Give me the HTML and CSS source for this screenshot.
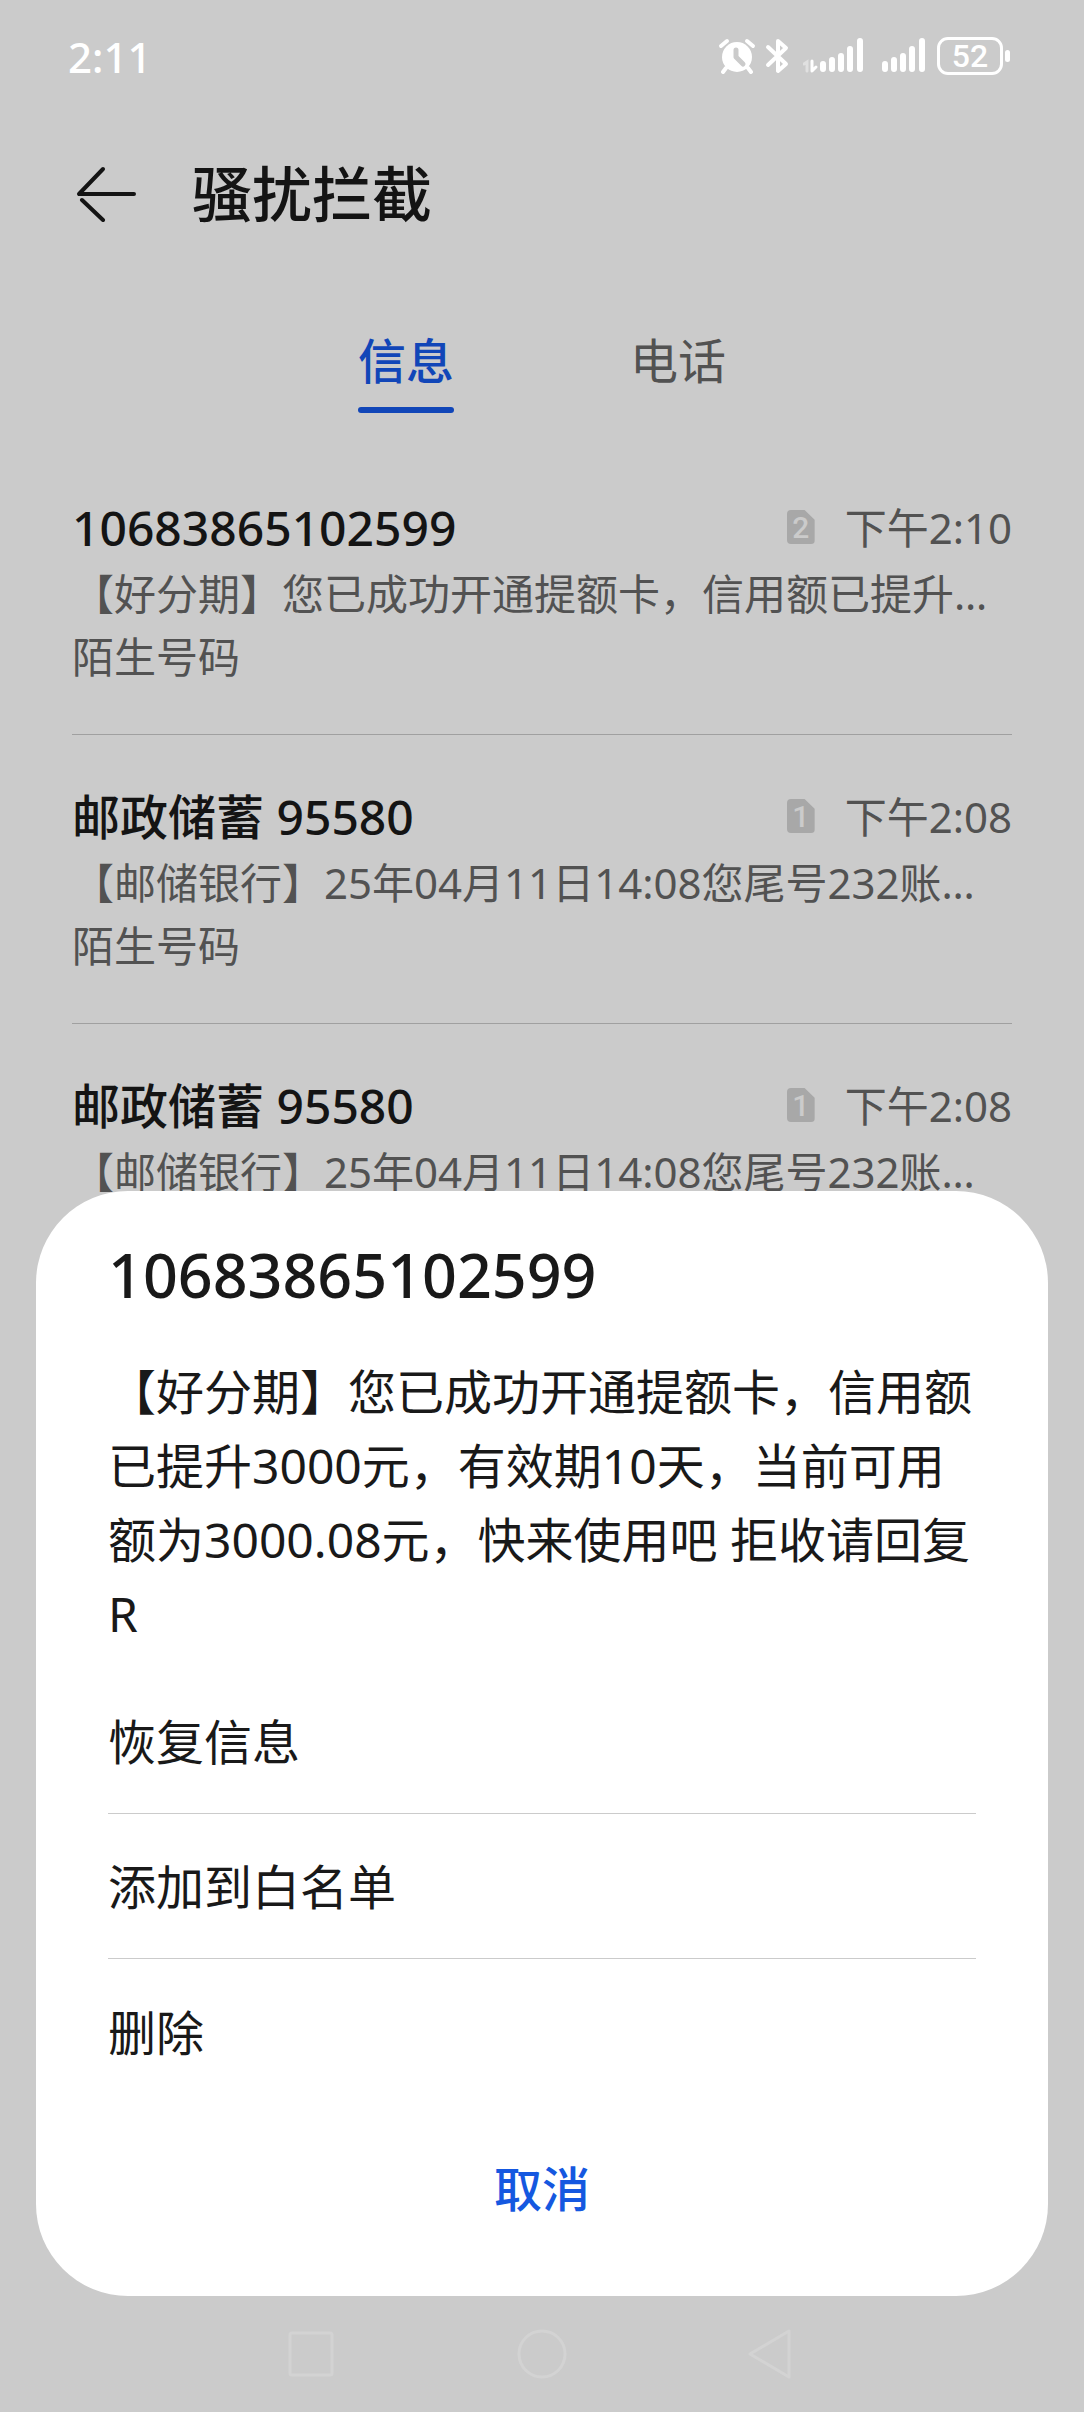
FILE: index.html
```html
<!DOCTYPE html>
<html lang="zh-CN">
<head>
  <meta charset="UTF-8">
  <title>骚扰拦截</title>
  <meta name="viewport" content="width=device-width, initial-scale=1.0">
  <link rel="stylesheet" href="styles.css">
</head>
<body>

  <div class="screen">
    <!-- Status bar -->
    <div class="status-bar">
      <span class="clock">2:11</span>
      <div class="status-icons">
        <svg class="icon-alarm" width="38" height="36" viewBox="0 0 38 36" fill="none" stroke="#fff" stroke-linecap="round">
          <path d="M3 8 L9 3 M35 8 L29 3" stroke-width="4"/>
          <path d="M8 30 L5 34 M30 30 L33 34" stroke-width="4"/>
          <circle cx="19" cy="19" r="15" fill="#fff" stroke="none"/>
          <path d="M18 12 V19 L25 26" stroke="#cbcbcb" stroke-width="5" stroke-linejoin="round"/>
        </svg>
        <svg class="icon-bluetooth" width="24" height="36" viewBox="0 0 24 36" fill="none" stroke="#fff" stroke-width="4" stroke-linecap="round" stroke-linejoin="round">
          <path d="M3 9 L21 26 L13 33 V3 L21 10 L3 27"/>
        </svg>
        <svg class="icon-data" width="60" height="36" viewBox="0 0 60 36" fill="none" stroke="#fff" stroke-linecap="round">
          <path d="M1 26 L4 24 V33" stroke-width="3" opacity=".4"/>
          <path d="M9 23 V33 L13 29" stroke-width="3" stroke-linejoin="round"/>
          <path d="M20 26 V31 M29 22 V31 M38 18 V31 M47 11 V31 M57 3 V31" stroke-width="6"/>
        </svg>
        <svg class="icon-signal" width="43" height="36" viewBox="0 0 43 36" fill="none" stroke="#fff" stroke-width="6" stroke-linecap="round">
          <path d="M3 26 V31 M12 22 V31 M21 18 V31 M30 11 V31 M40 3 V31"/>
        </svg>
        <span class="battery">52</span>
      </div>
    </div>

    <!-- Title -->
    <header class="header">
      <button class="back" aria-label="返回">
        <svg width="60" height="56" viewBox="0 0 60 56" fill="none" stroke="#141414" stroke-width="4" stroke-linecap="round" stroke-linejoin="round">
          <path d="M27 3 L3 28 H58"/>
          <path d="M6 34 L27 54"/>
        </svg>
      </button>
      <h1>骚扰拦截</h1>
    </header>

    <nav class="tabs">
      <button class="tab active">信息</button>
      <button class="tab">电话</button>
    </nav>

    <!-- Blocked messages -->
    <ul class="list">
      <li class="item">
        <div class="item-head">
          <span class="name">10683865102599</span>
          <span class="sim">2</span>
          <span class="time">下午2:10</span>
        </div>
        <p class="preview">【好分期】您已成功开通提额卡，信用额已提升…</p>
        <p>陌生号码</p>
      </li>
      <li class="item">
        <div class="item-head">
          <span class="name">邮政储蓄 95580</span>
          <span class="sim">1</span>
          <span class="time">下午2:08</span>
        </div>
        <p class="preview">【邮储银行】25年04月11日14:08您尾号232账…</p>
        <p>陌生号码</p>
      </li>
      <li class="item">
        <div class="item-head">
          <span class="name">邮政储蓄 95580</span>
          <span class="sim">1</span>
          <span class="time">下午2:08</span>
        </div>
        <p class="preview">【邮储银行】25年04月11日14:08您尾号232账…</p>
      </li>
    </ul>

    <!-- Navigation keys -->
    <div class="nav-keys">
      <button aria-label="最近任务">
        <svg width="52" height="52" viewBox="0 0 52 52" fill="none" stroke="#d3d3d3" stroke-width="3"><rect x="4" y="5" width="42" height="42" rx="2"/></svg>
      </button>
      <button aria-label="主屏幕">
        <svg width="52" height="52" viewBox="0 0 52 52" fill="none" stroke="#d3d3d3" stroke-width="3"><circle cx="26" cy="26" r="23"/></svg>
      </button>
      <button aria-label="返回">
        <svg width="52" height="52" viewBox="0 0 52 52" fill="none" stroke="#d3d3d3" stroke-width="3" stroke-linejoin="round"><path d="M4 26 L43 3 V49 Z"/></svg>
      </button>
    </div>

    <!-- Message dialog -->
    <div class="dialog" role="dialog" aria-labelledby="dialog-title">
      <h2 id="dialog-title">10683865102599</h2>
      <p class="message">【好分期】您已成功开通提额卡，信用额已提升3000元，有效期10天，当前可用额为3000.08元，快来使用吧 拒收请回复R</p>
      <div class="actions">
        <button>恢复信息</button>
        <button>添加到白名单</button>
        <button>删除</button>
      </div>
      <button class="cancel">取消</button>
    </div>
  </div>

</body>
</html>
```
FILE: styles.css
```css
* {
  box-sizing: border-box;
}

body {
  background: #cbcbcb;
  color: #141414;
  font-family: "Noto Sans", "Noto Sans CJK SC", sans-serif;
  text-spacing-trim: space-all;
  margin: 0;
}

h1, h2, p, ul {
  margin: 0;
  padding: 0;
}

button {
  background: none;
  border: none;
  padding: 0;
  font-family: inherit;
  color: inherit;
}

svg {
  display: block;
}

.screen {
  position: relative;
  display: flex;
  flex-direction: column;
  min-height: 100vh;
  overflow: hidden;
}

/* status bar */
.status-bar {
  display: flex;
  align-items: center;
  justify-content: space-between;
  height: 112px;
  padding: 0 72px 0 68px;
  color: #fff;
}

.clock {
  font-size: 42px;
  font-weight: 500;
}

.status-icons {
  display: flex;
  align-items: center;
}

.icon-bluetooth {
  margin-left: 9px;
}

.icon-data {
  margin-left: 14px;
}

.icon-signal {
  margin-left: 19px;
}

.battery {
  position: relative;
  width: 66px;
  height: 38px;
  margin-left: 12px;
  margin-right: 9px;
  border: 3px solid #fff;
  border-radius: 11px;
  font: 500 32px/32px Roboto, sans-serif;
  text-align: center;
}

.battery::after {
  content: "";
  position: absolute;
  top: 10px;
  right: -10px;
  width: 5px;
  height: 12px;
  border-radius: 3px;
  background: #fff;
}

/* header */
.header {
  display: flex;
  align-items: center;
  gap: 56px;
  height: 164px;
  padding: 0 76px;
}

h1 {
  font-size: 60px;
  font-weight: 500;
  line-height: 80px;
}

.tabs {
  display: flex;
  justify-content: center;
  gap: 176px;
  height: 170px;
  padding-top: 50px;
}

.tab {
  height: 88px;
  padding-bottom: 12px;
  border-bottom: 6px solid transparent;
  font-size: 48px;
  line-height: 70px;
  color: #525252;
}

.tab.active {
  position: relative;
  color: #1146b8;
  font-weight: 500;
}

.tab.active::after {
  content: "";
  position: absolute;
  left: 0;
  right: 0;
  bottom: -5px;
  height: 6px;
  border-radius: 3px;
  background: #1146b8;
}

/* list */
.list {
  flex: 1;
  list-style: none;
  padding: 0 72px;
}

.item {
  padding: 46px 0;
  border-bottom: 1px solid #a0a0a0;
  font-size: 42px;
  line-height: 63px;
  color: #525252;
}

.item:last-child {
  border-bottom: none;
}

.item-head {
  display: flex;
  align-items: center;
  height: 70px;
}

.name {
  flex: 1;
  font-size: 48px;
  font-weight: 500;
  color: #141414;
}

.sim {
  width: 28px;
  height: 34px;
  margin-right: 30px;
  border-radius: 4px;
  background: #a8a8a8;
  clip-path: polygon(0 0, 64% 0, 100% 29%, 100% 100%, 0 100%);
  font: 500 30px/36px Roboto, sans-serif;
  text-align: center;
  color: #cbcbcb;
}

.preview {
  white-space: nowrap;
  overflow: hidden;
}

/* navigation keys */
.nav-keys {
  display: flex;
  align-items: center;
  justify-content: center;
  gap: 178px;
  height: 116px;
}

/* dialog */
.dialog {
  position: absolute;
  left: 36px;
  right: 36px;
  bottom: 116px;
  padding: 44px 72px 60px;
  border-radius: 92px;
  background: #fff;
  color: #191919;
  font-size: 48px;
}

h2 {
  font-size: 61px;
  font-weight: 500;
  line-height: 80px;
}

.message {
  margin-top: 40px;
  line-height: 74px;
}

.actions {
  display: flex;
  flex-direction: column;
  margin-top: 18px;
}

.actions button {
  height: 145px;
  padding-bottom: 4px;
  border-bottom: 1px solid #cbcbcb;
  font-size: 48px;
  text-align: left;
}

.actions button:last-child {
  border-bottom: none;
}

.cancel {
  display: block;
  width: 100%;
  height: 96px;
  margin-top: 36px;
  padding-bottom: 4px;
  font-size: 48px;
  font-weight: 500;
  color: #1558e0;
}
```
